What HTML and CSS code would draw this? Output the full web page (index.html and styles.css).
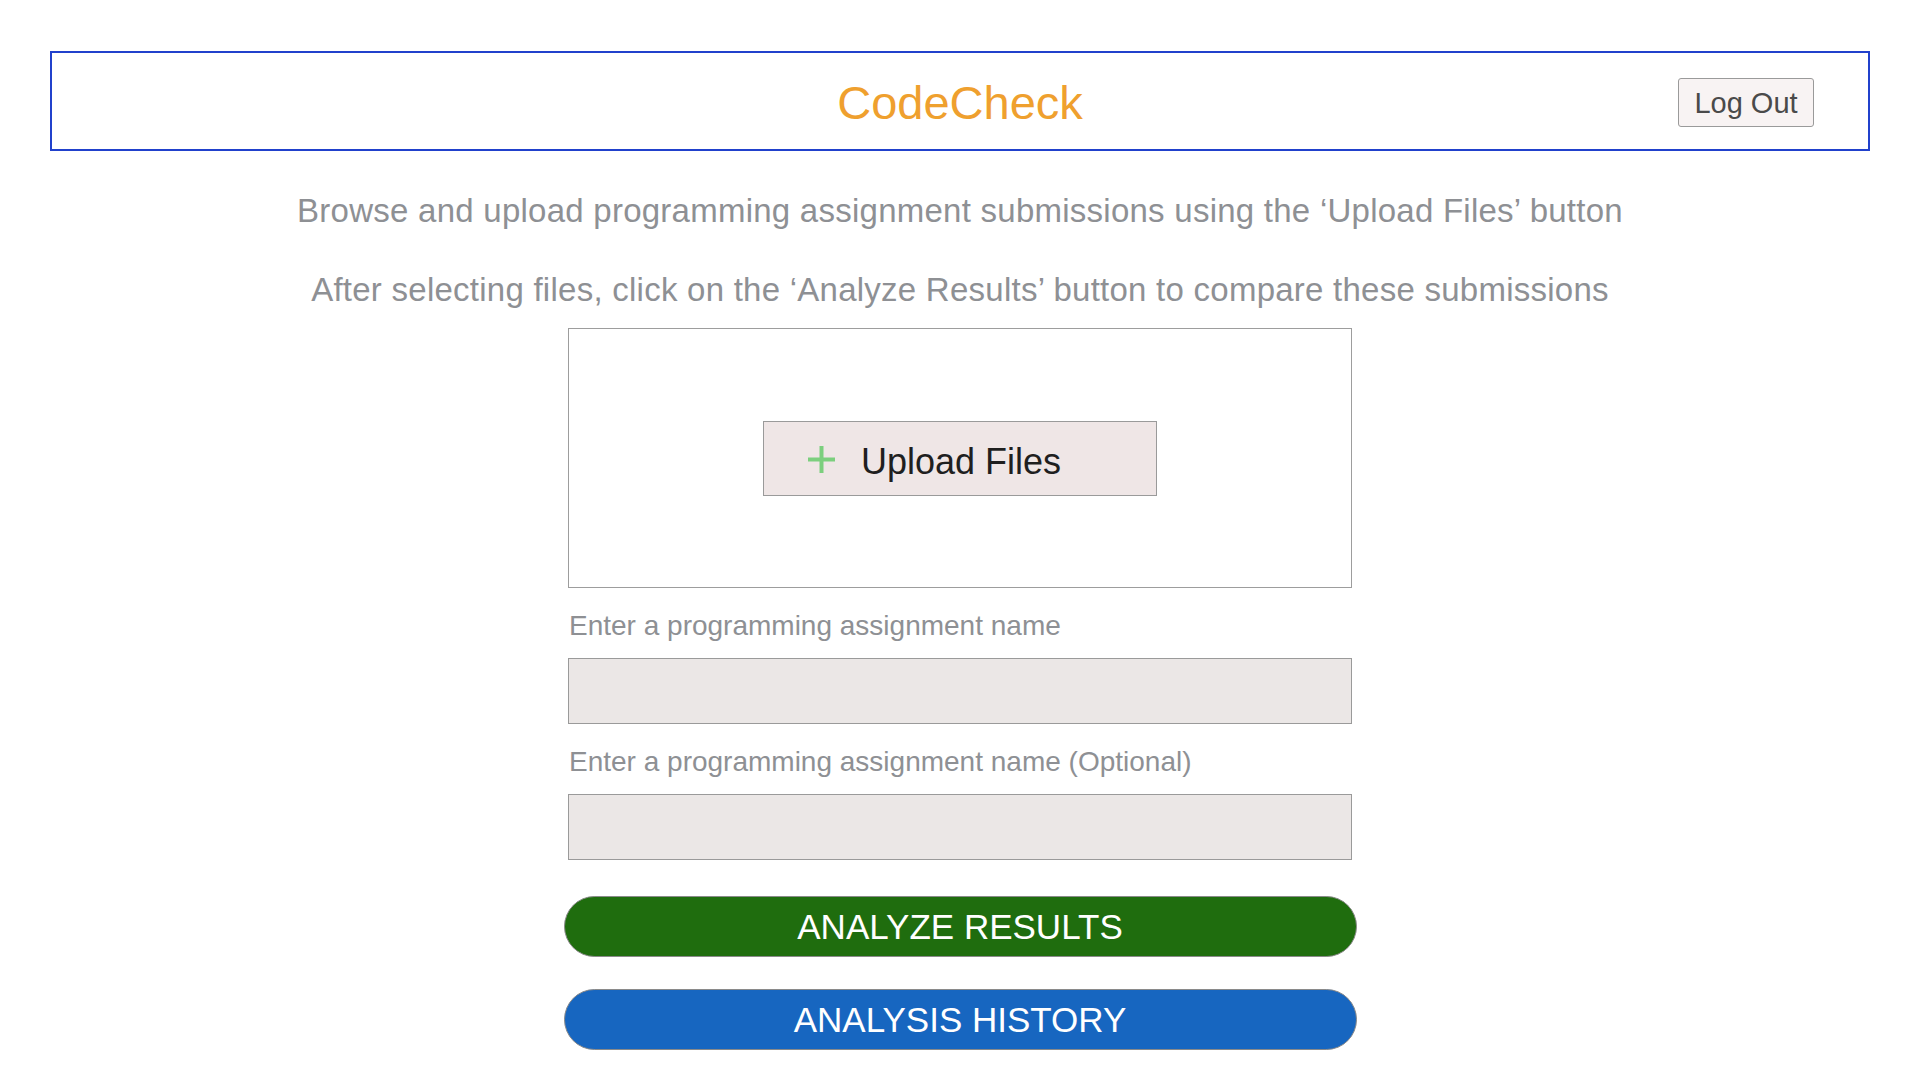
FILE: index.html
```html
<!DOCTYPE html>
<html lang="en">
<head>
<meta charset="utf-8">
<title>CodeCheck</title>
<link rel="stylesheet" href="styles.css">
</head>
<body>
  <header class="topbar">
    <div class="topbar-spacer"></div>
    <h1 class="brand">CodeCheck</h1>
    <div class="topbar-actions">
      <button class="logout" type="button">Log Out</button>
    </div>
  </header>

  <main class="content">
    <div class="intro">
      <p>Browse and upload programming assignment submissions using the ‘Upload Files’ button</p>
      <p>After selecting files, click on the ‘Analyze Results’ button to compare these submissions</p>
    </div>

    <div class="form">
      <div class="dropzone">
        <button class="upload" type="button">
          <svg class="plus" width="27" height="27" viewBox="0 0 27 27" aria-hidden="true">
            <path d="M13.5 0 V27 M0 13.5 H27" stroke="#7ccf7e" stroke-width="4" fill="none"/>
          </svg>
          <span>Upload Files</span>
        </button>
      </div>

      <label class="field-label" for="name1">Enter a programming assignment name</label>
      <input class="field" id="name1" type="text">

      <label class="field-label" for="name2">Enter a programming assignment name (Optional)</label>
      <input class="field" id="name2" type="text">
    </div>

    <div class="actions">
      <button class="pill pill-green" type="button">ANALYZE RESULTS</button>
      <button class="pill pill-blue" type="button">ANALYSIS HISTORY</button>
    </div>
  </main>
</body>
</html>
```

FILE: styles.css
```css
html, body {
  margin: 0;
  padding: 0;
  background: #ffffff;
}

body {
  font-family: "Liberation Sans", Arial, Helvetica, sans-serif;
}

.topbar {
  box-sizing: border-box;
  margin: 51px 50px 0 50px;
  height: 100px;
  border: 2px solid #2141cc;
  display: grid;
  grid-template-columns: 1fr auto 1fr;
  align-items: center;
}

.brand {
  margin: 0;
  font-weight: normal;
  font-size: 47px;
  line-height: 56px;
  color: #efa02e;
  padding-top: 4px;
}

.topbar-actions {
  display: flex;
  justify-content: flex-end;
  padding-right: 54px;
}

.logout {
  box-sizing: border-box;
  width: 136px;
  height: 49px;
  padding: 3px 0 0 0;
  background: #f8f3f3;
  border: 1px solid #9a9a9a;
  border-radius: 3px;
  font-family: "Liberation Sans", Arial, sans-serif;
  font-size: 29px;
  color: #4a4a4a;
  margin-top: 2px;
}

.content {
  display: flex;
  flex-direction: column;
  align-items: center;
}

.intro {
  margin-top: 40px;
  display: flex;
  flex-direction: column;
  align-items: center;
  gap: 39px;
}

.intro p {
  margin: 0;
  font-size: 33px;
  line-height: 40px;
  letter-spacing: 0.25px;
  color: #8e9094;
  white-space: nowrap;
}

.form {
  width: 784px;
  margin-top: 18px;
  display: flex;
  flex-direction: column;
}

.dropzone {
  box-sizing: border-box;
  height: 260px;
  border: 1px solid #9d9d9d;
  display: flex;
  align-items: center;
  justify-content: center;
}

.upload {
  box-sizing: border-box;
  width: 394px;
  height: 75px;
  margin-top: 1px;
  padding: 0 0 0 44px;
  background: #efe6e6;
  border: 1px solid #9a9a9a;
  border-radius: 0;
  display: flex;
  align-items: center;
  gap: 26px;
  font-family: "Liberation Sans", Arial, sans-serif;
  font-size: 36px;
  color: #1f1f1f;
}

.upload span {
  line-height: 40px;
  padding-top: 6px;
}

.plus {
  flex: none;
  margin-top: 2px;
}

.field-label {
  margin-top: 22px;
  padding-left: 1px;
  font-size: 28px;
  line-height: 32px;
  color: #8e9094;
}

.field {
  box-sizing: border-box;
  margin-top: 16px;
  height: 66px;
  width: 100%;
  background: #ebe7e6;
  border: 1px solid #9a9a9a;
  border-radius: 0;
  outline: none;
  font-family: "Liberation Sans", Arial, sans-serif;
  font-size: 24px;
  padding: 0 12px;
}

.actions {
  margin-top: 36px;
  display: flex;
  flex-direction: column;
  gap: 32px;
}

.pill {
  box-sizing: border-box;
  width: 793px;
  height: 61px;
  border: 1px solid #8a8a8a;
  border-radius: 31px;
  color: #ffffff;
  font-family: "Liberation Sans", Arial, sans-serif;
  font-size: 35px;
  padding: 0;
}

.pill-green {
  background: #1f6d0e;
}

.pill-blue {
  background: #1766c0;
}
```
